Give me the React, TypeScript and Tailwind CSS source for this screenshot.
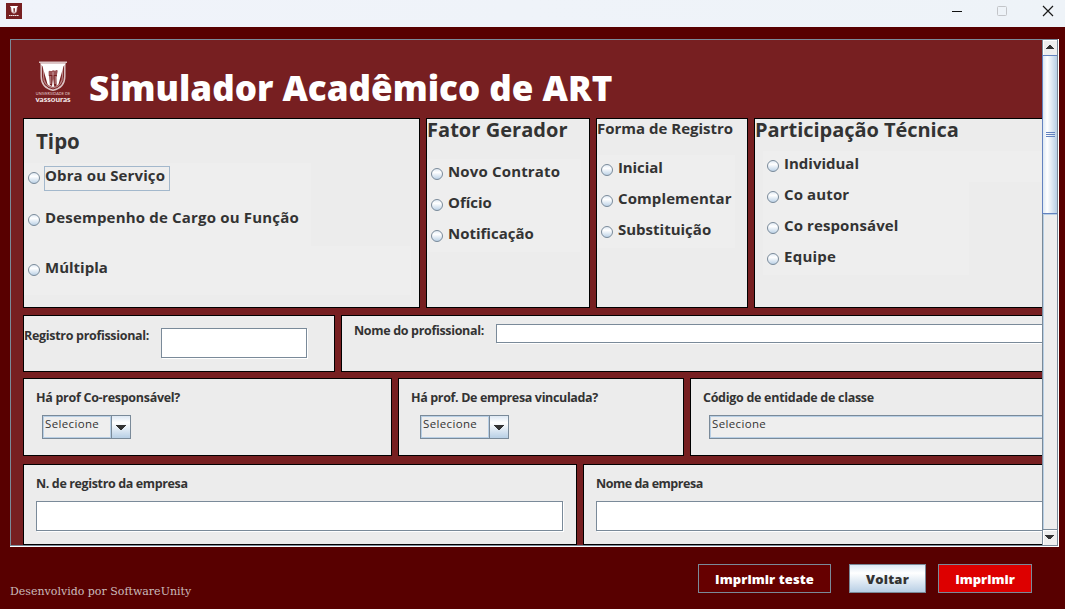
import type { ReactNode } from 'react';

function Radio() {
  return (
    <svg width="12" height="12" viewBox="0 0 12 12" className="-mt-[2px] shrink-0">
      <defs>
        <linearGradient id="radio-fill" x1="0" y1="0" x2="0" y2="1">
          <stop offset="0" stopColor="#dde8f3" />
          <stop offset="0.35" stopColor="#ffffff" />
          <stop offset="1" stopColor="#b8cfe5" />
        </linearGradient>
      </defs>
      <circle cx="6" cy="6" r="5.5" fill="url(#radio-fill)" stroke="#7a8a99" />
    </svg>
  );
}

function Option({ label, className = '', focused = false }: { label: string; className?: string; focused?: boolean }) {
  return (
    <label className={`flex h-[25px] items-center gap-1 ${className}`}>
      <Radio />
      <span
        className={`flex h-[25px] items-start border pr-1 text-[15px] leading-4 font-bold whitespace-nowrap ${
          focused ? 'border-[#a3b8cc]' : 'border-transparent'
        }`}
      >
        {label}
      </span>
    </label>
  );
}

function Panel({ className = '', children }: { className?: string; children: ReactNode }) {
  return <section className={`shrink-0 border border-black bg-[#ececec] ${className}`}>{children}</section>;
}

function Label({ className = '', children }: { className?: string; children: ReactNode }) {
  return (
    <div className={`h-4 shrink-0 pt-px text-[12.5px] leading-4 font-bold whitespace-nowrap ${className}`}>{children}</div>
  );
}

function Field({ className = '' }: { className?: string }) {
  return <div className={`shrink-0 border border-[#7a8a99] bg-white shadow-[1px_1px_0_#ffffff] ${className}`} />;
}

function Combo({ className = '' }: { className?: string }) {
  return (
    <div className={`mt-[10px] flex h-6 border border-[#7a8a99] bg-[#eeeeee] ${className}`}>
      <div className="flex-1 border border-[#b8cfe5] pt-px pl-px text-[11.5px] leading-3 tracking-[0.35px]">
        Selecione
      </div>
      <div className="flex w-[19px] items-center justify-center border-l border-[#7a8a99] bg-linear-to-b from-[#dde8f3] via-white via-30% to-[#b8cfe5]">
        <svg width="10" height="5" viewBox="0 0 10 5" className="mt-px" shapeRendering="crispEdges">
          <path d="M0 0h10v1H9v1H8v1H7v1H6v1H4V4H3V3H2V2H1V1H0z" fill="#333333" />
        </svg>
      </div>
    </div>
  );
}

function Crest() {
  return (
    <div className="mt-[21px] ml-[10px] flex w-10 flex-col items-center overflow-visible">
      <svg width="40" height="31" viewBox="0 0 40 31" fill="none">
        <path d="M6 1.3h28M8.2 3v12c0 8 5 12.8 11.8 14.2C26.800 27.800 31.800 23 31.800 15V3" stroke="#dcc3c4" strokeWidth="1.500" />
        <path d="M10.500 3.500v11.500c0 6.800 4 10.800 9.500 12 5.500-1.200 9.500-5.200 9.500-12V3.500" stroke="#b98587" strokeWidth="1.200" />
        <path d="M7 2.200h26l-2.500 3-5 18c-1.500 1.300-3.500 2.200-5.500 2.700-2-.5-4-1.400-5.500-2.700L9.500 5.200z" fill="#ffffff" />
        <path d="M15.600 10.500c1.200-2 2.400.5 3.700-.8s2.300 1 3.700-.4c1.300-1 2 .2 1.500 1.700l-.8 4h-8z" fill="#9a5255" />
        <path d="M16.200 14h7.800l-.6 2.300.2 8.200-2.300 1-1.200-7.500-1.200 7-2-1z" fill="#771f21" />
        <path d="M20 11v13.500M17.800 15v8M22.200 15v8" stroke="#dfc4c5" strokeWidth="0.700" />
      </svg>
      <span className="h-[4px] font-['Lato',sans-serif] text-[3.8px] leading-[4px] tracking-[0.05px] whitespace-nowrap text-[#e3cccd]">
        UNIVERSIDADE DE
      </span>
      <span className="h-[6px] font-['Lato',sans-serif] text-[8px] leading-[6px] font-black whitespace-nowrap text-[#f3e8e8]">
        vassouras
      </span>
    </div>
  );
}

function AppIcon() {
  return (
    <svg width="16" height="16" viewBox="0 0 16 16">
      <rect width="16" height="16" fill="#771f21" />
      <path d="M4 3h8l-.8 1.300v2.700c0 2-1.400 3.200-3.200 3.800C6.200 10.200 4.800 9 4.800 7V4.300z" fill="#cfa9aa" />
      <path d="M4 3h8l-1.200 1.500L9.600 9H6.400L5.200 4.500z" fill="#ffffff" />
      <path d="M7.300 5.300h1.700L8.700 9h-1z" fill="#771f21" />
      <path d="M3 12.500h10" stroke="#f0e2e2" strokeWidth="1.200" strokeDasharray="1.500 .4" />
    </svg>
  );
}

function TitleBar() {
  return (
    <header className="flex h-[27px] shrink-0 items-start justify-between bg-linear-to-r from-[#f0f3fa] to-[#eef3f8] pt-[3px] pl-[6px]">
      <AppIcon />
      <svg width="113" height="20" viewBox="952 3 113 20" fill="none">
        <path d="M952 11.500h10" stroke="#111111" />
        <rect x="997.500" y="6.500" width="9" height="9" rx="1" stroke="#c3c5c9" />
        <path d="M1043 6l10 10M1053 6l-10 10" stroke="#1a1a1a" strokeWidth="1.200" />
      </svg>
    </header>
  );
}

function ScrollBar() {
  return (
    <div className="flex w-[15px] shrink-0 flex-col border-l border-[#7a8a99] bg-[#eeeeee]">
      <div className="flex h-[15px] items-start border-t border-l border-white pt-1 pl-[2px]">
        <svg width="8" height="4" viewBox="0 0 8 4" shapeRendering="crispEdges">
          <path d="M0 4V3h1V2h1V1h1V0h2v1h1v1h1v1h1v1z" fill="#333333" />
        </svg>
      </div>
      <div className="-ml-px flex h-[159px] flex-col items-center justify-center gap-px border border-r-0 border-[#6382bf] bg-linear-to-r from-[#dde8f3] via-white via-30% to-[#b8cfe5]">
        <div className="h-px w-[9px] bg-[#6382bf]" />
        <div className="h-px w-[9px] bg-[#6382bf]" />
        <div className="h-px w-[9px] bg-[#6382bf]" />
      </div>
      <div className="flex-1 border-t border-l border-[#b8cfe5]" />
      <div className="flex h-4 items-start border-t border-[#7a8a99] pt-[5px] pl-[2px] shadow-[inset_1px_1px_0_#ffffff]">
        <svg width="9" height="4" viewBox="0 0 9 4" shapeRendering="crispEdges">
          <path d="M0 0h9v1H8v1H7v1H6v1H3V3H2V2H1V1H0z" fill="#333333" />
        </svg>
      </div>
    </div>
  );
}

function ActionButton({ className, children }: { className: string; children: ReactNode }) {
  return (
    <button
      className={`h-[29px] border border-[#7a8a99] pt-px text-[13px] leading-5 font-extrabold whitespace-nowrap ${className}`}
    >
      {children}
    </button>
  );
}

export default function App() {
  return (
    <div className="flex h-[609px] w-[1065px] flex-col overflow-hidden bg-[#580000] font-['Open_Sans','Noto_Sans',sans-serif] text-[#333333]">
      <TitleBar />

      <main className="mt-3 ml-[10px] flex h-[508px] w-[1049px] shrink-0 border-r border-b border-white">
        <div className="flex min-w-0 flex-1 border border-[#7a8a99]">
          <div className="flex min-w-0 flex-1 flex-col overflow-hidden bg-[#771f21] pl-3">
            <div className="flex h-[78px] shrink-0">
              <Crest />
              <h1 className="mt-7 ml-4 font-['Noto_Sans','Open_Sans',sans-serif] text-[35px] leading-10 font-black whitespace-nowrap text-white">
                Simulador Acadêmico de ART
              </h1>
            </div>

            <div className="flex h-[190px] shrink-0 gap-[6px]">
              <Panel className="w-[397px]">
                <h2 className="mt-3 ml-3 text-[20.5px] leading-5 font-bold">Tipo</h2>
                <div className="mt-3 h-[83px] w-[287px] bg-[#eeeeee] pt-[3px] pl-1">
                  <Option label="Obra ou Serviço" className="tracking-[0.12px]" focused />
                  <Option label="Desempenho de Cargo ou Função" className="mt-[17px] tracking-[0.18px]" />
                </div>
                <div className="h-[49px] w-[387px] bg-[#eeeeee] pt-3 pl-1">
                  <Option label="Múltipla" />
                </div>
              </Panel>

              <Panel className="w-[164px]">
                <h2 className="mt-px text-[20px] leading-5 font-bold tracking-[0.04px] whitespace-nowrap">
                  Fator Gerador
                </h2>
                <div className="mt-[19px] flex w-[154px] flex-col gap-[6px] bg-[#eeeeee] py-[3px] pl-1">
                  <Option label="Novo Contrato" className="tracking-[0.16px]" />
                  <Option label="Ofício" />
                  <Option label="Notificação" />
                </div>
              </Panel>

              <Panel className="w-[152px]">
                <h2 className="mt-[2px] text-[15px] leading-[15px] font-bold whitespace-nowrap">Forma de Registro</h2>
                <div className="mt-[19px] flex w-[138px] flex-col gap-[6px] bg-[#eeeeee] py-[3px] pl-1">
                  <Option label="Inicial" className="tracking-[-0.1px]" />
                  <Option label="Complementar" className="tracking-[0.1px]" />
                  <Option label="Substituição" />
                </div>
              </Panel>

              <Panel className="w-[420px]">
                <h2 className="mt-px text-[20px] leading-5 font-bold tracking-[-0.05px] whitespace-nowrap">
                  Participação Técnica
                </h2>
                <div className="mt-[11px] ml-2 h-[31px] bg-[#eeeeee] pt-[3px] pl-1">
                  <Option label="Individual" />
                </div>
                <div className="ml-2 flex w-[206px] flex-col gap-[6px] bg-[#eeeeee] py-[3px] pl-1">
                  <Option label="Co autor" className="tracking-[0.12px]" />
                  <Option label="Co responsável" className="tracking-[0.1px]" />
                  <Option label="Equipe" className="tracking-[0.25px]" />
                </div>
              </Panel>
            </div>

            <div className="mt-[7px] flex h-[57px] shrink-0 gap-[6px]">
              <Panel className="flex w-[312px] items-start">
                <Label className="mt-[11px] w-[137px] tracking-[-0.31px]">Registro profissional:</Label>
                <Field className="mt-3 h-[30px] w-[146px]" />
              </Panel>
              <Panel className="flex w-[800px] items-start pl-3">
                <Label className="mt-[6px] w-[142px] tracking-[-0.33px]">Nome do profissional:</Label>
                <Field className="mt-2 h-[19px] w-[600px]" />
              </Panel>
            </div>

            <div className="mt-[6px] flex h-[78px] shrink-0 gap-[6px]">
              <Panel className="w-[369px]">
                <Label className="mt-[10px] ml-3 tracking-[-0.29px]">Há prof Co-responsável?</Label>
                <Combo className="ml-[18px] w-[89px]" />
              </Panel>
              <Panel className="w-[286px]">
                <Label className="mt-[10px] ml-3 tracking-[-0.35px]">Há prof. De empresa vinculada?</Label>
                <Combo className="ml-[21px] w-[89px]" />
              </Panel>
              <Panel className="w-[500px]">
                <Label className="mt-[10px] ml-3 tracking-[-0.29px]">Código de entidade de classe</Label>
                <Combo className="ml-[18px] w-[460px]" />
              </Panel>
            </div>

            <div className="mt-2 flex h-[81px] shrink-0 gap-[6px]">
              <Panel className="w-[554px]">
                <Label className="mt-[10px] ml-3 tracking-[-0.37px]">N. de registro da empresa</Label>
                <Field className="mt-[10px] ml-3 h-[30px] w-[527px]" />
              </Panel>
              <Panel className="w-[600px]">
                <Label className="mt-[10px] ml-3 tracking-[-0.48px]">Nome da empresa</Label>
                <Field className="mt-[10px] ml-3 h-[30px] w-[560px]" />
              </Panel>
            </div>
          </div>
          <ScrollBar />
        </div>
      </main>

      <footer className="flex flex-1 items-start pt-[17px] pr-[33px] pl-[10px]">
        <p className="mt-[21px] flex-1 font-['DejaVu_Serif',serif] text-[11px] leading-[14px] whitespace-nowrap text-[#cbbcbc]">
          Desenvolvido por SoftwareUnity
        </p>
        <ActionButton className="w-[133px] bg-[#660000] tracking-[0.09px] text-white">Imprimir teste</ActionButton>
        <ActionButton className="ml-[18px] w-[77px] bg-linear-to-b from-[#dde8f3] via-white via-30% to-[#b8cfe5] tracking-[0.22px]">
          Voltar
        </ActionButton>
        <ActionButton className="ml-3 w-[94px] bg-[#dd0000] text-white">Imprimir</ActionButton>
      </footer>
    </div>
  );
}
